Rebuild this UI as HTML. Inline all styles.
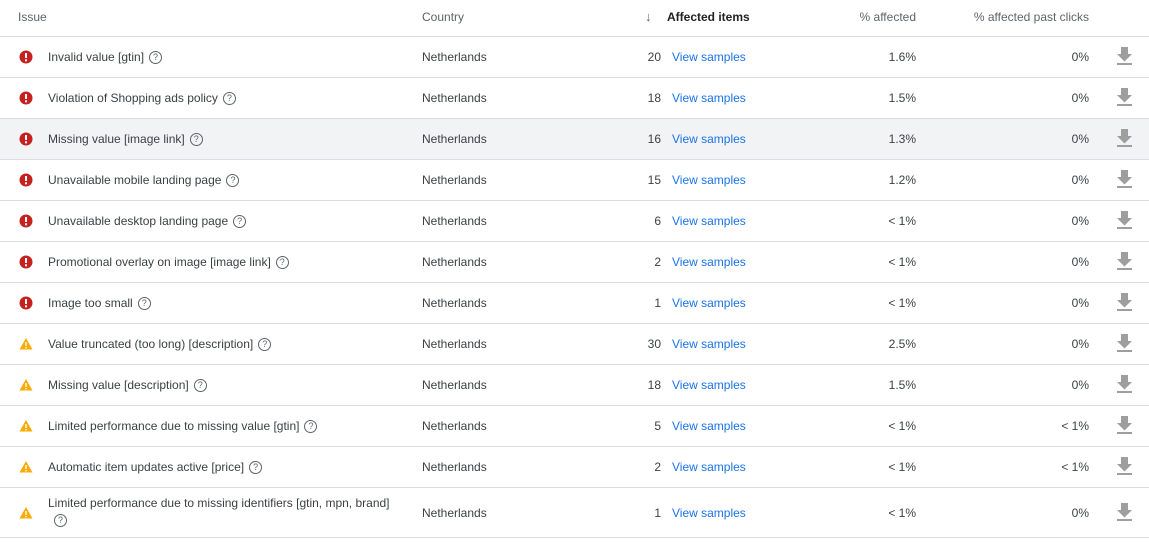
<!DOCTYPE html>
<html><head><meta charset="utf-8"><style>
body{margin:0;width:1149px;height:543px;background:#fff;font-family:"Liberation Sans",Arial,sans-serif;font-size:12px;color:#3c4043;position:relative;overflow:hidden}
.r{position:absolute;left:0;width:1149px;border-bottom:1px solid #dadce0}
.r>*{position:absolute}
.h{color:#5f6368}
.ic{left:19px;width:14px;height:14px}
.t{left:48px}
.c{left:422px}
.n{right:488px;text-align:right}
.v{left:672px;color:#1a73e8}
.p{right:233px}
.q{right:60px}
.d{left:1116px}
.qm{display:inline-block;width:11px;height:11px;border:1.2px solid #5f6368;border-radius:50%;font-size:9px;line-height:11px;text-align:center;color:#5f6368;margin-left:5px;vertical-align:1px}
.hl{background:#f1f3f4}
</style></head><body>
<div class="r" style="top:0;height:36px">
<span class="h" style="left:18px;top:10px">Issue</span>
<span class="h" style="left:422px;top:10px">Country</span>
<span style="left:645px;top:9px;color:#5f6368;font-size:13px">↓</span>
<span style="left:667px;top:10px;font-weight:bold;color:#202124">Affected items</span>
<span class="h" style="right:233px;top:10px">% affected</span>
<span class="h" style="right:60px;top:10px">% affected past clicks</span>
</div>
<div id="rows"></div>
<script>
(function(){
var R=[["e","Invalid value [gtin]",20,"1.6%","0%"],["e","Violation of Shopping ads policy",18,"1.5%","0%"],["e","Missing value [image link]",16,"1.3%","0%"],["e","Unavailable mobile landing page",15,"1.2%","0%"],["e","Unavailable desktop landing page",6,"&lt; 1%","0%"],["e","Promotional overlay on image [image link]",2,"&lt; 1%","0%"],["e","Image too small",1,"&lt; 1%","0%"],["w","Value truncated (too long) [description]",30,"2.5%","0%"],["w","Missing value [description]",18,"1.5%","0%"],["w","Limited performance due to missing value [gtin]",5,"&lt; 1%","&lt; 1%"],["w","Automatic item updates active [price]",2,"&lt; 1%","&lt; 1%"],["w","Limited performance due to missing identifiers [gtin, mpn, brand]",1,"&lt; 1%","0%"]];
var E='<svg class="ic" style="top:{y}px" viewBox="0 0 14 14"><circle cx="7" cy="7" r="6.5" fill="#c5221f"/><rect x="6" y="3" width="2" height="5" fill="#fff"/><rect x="6" y="9.3" width="2" height="2" fill="#fff"/></svg>';
var W='<svg class="ic" style="top:{y}px" viewBox="0 0 14 14"><path d="M7 1L13.5 12.5H0.5Z" fill="#f9ab00"/><rect x="6.3" y="5" width="1.4" height="4" fill="#fff"/><rect x="6.3" y="10" width="1.4" height="1.4" fill="#fff"/></svg>';
var D='<svg class="d" style="top:{y}px" width="17" height="18" viewBox="0 0 17 18"><path d="M5 0h7v7h4l-7.5 7.5L1 7h4z" fill="#9e9e9e"/><rect x="1" y="16" width="15" height="2" fill="#9e9e9e"/></svg>';
var h='',yy=37;
R.forEach(function(r,i){var last=i==11,ht=last?49:40,ty=last?18:13;
var issue=last?'<span class="t" style="top:7px;line-height:17px">'+r[1]+'<br><span class="qm" style="margin-left:6px">?</span></span>':'<span class="t" style="top:'+ty+'px">'+r[1]+'<span class="qm">?</span></span>';
h+='<div class="r'+(i==2?' hl':'')+'" style="top:'+yy+'px;height:'+ht+'px">'+(r[0]=="e"?E:W).replace("{y}",ht/2-7)+issue+'<span class="c" style="top:'+ty+'px">Netherlands</span><span class="n" style="top:'+ty+'px">'+r[2]+'</span><span class="v" style="top:'+ty+'px">View samples</span><span class="p" style="top:'+ty+'px">'+r[3]+'</span><span class="q" style="top:'+ty+'px">'+r[4]+'</span>'+D.replace("{y}",ht/2-10)+'</div>';
yy+=ht+1;});
document.getElementById('rows').outerHTML=h;
})();
</script>
</body></html>
